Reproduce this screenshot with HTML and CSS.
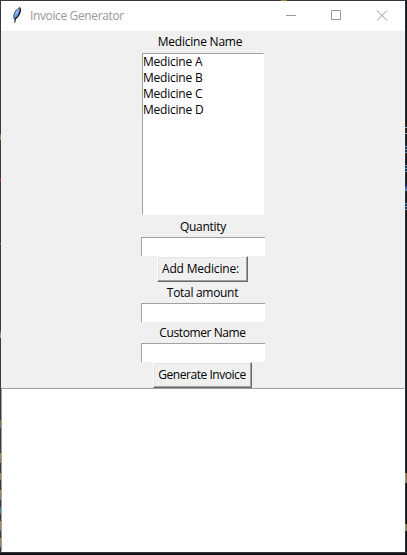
FILE: index.html
```html
<!DOCTYPE html>
<html lang="en">
<head>
<meta charset="utf-8">
<title>Invoice Generator</title>
<link rel="stylesheet" href="styles.css">
</head>
<body>
<div class="window">
  <header class="titlebar">
    <svg class="feather" width="12" height="18" viewBox="0 0 12 18">
      <path d="M9 1.500C6 2.500 3.500 6 2.800 9.500L3 13l1.800-.8C7.500 10 9.800 5.500 9 1.500z" fill="#65a5f2" stroke="#34383f" stroke-width=".9"/>
      <path d="M9.500 2.500C9.500 6 7.500 10.500 4.500 12.800L3.600 16.500" fill="none" stroke="#0c1018" stroke-width="1.100"/>
      <path d="M4.500 8L7.800 2.800" stroke="#c9dcf2" stroke-width=".8"/>
    </svg>
    <span class="title">Invoice Generator</span>
    <svg class="controls" width="138" height="30" viewBox="0 0 138 30" fill="none" stroke="#999">
      <path d="M19 14.500h10M64.500 9.500h9v9h-9zM110 9.500l10 10M120 9.500l-10 10"/>
    </svg>
  </header>
  <main class="form">
    <div class="label name">Medicine Name</div>
    <div class="listbox">
      <div>Medicine A</div><div>Medicine B</div><div>Medicine C</div><div>Medicine D</div>
    </div>
    <div class="label quantity">Quantity</div>
    <input class="entry" aria-label="Quantity">
    <button class="button add">Add Medicine:</button>
    <div class="label total">Total amount</div>
    <input class="entry" aria-label="Total amount">
    <div class="label customer">Customer Name</div>
    <input class="entry" aria-label="Customer Name">
    <button class="button generate">Generate Invoice</button>
    <div class="output"></div>
  </main>
</div>
</body>
</html>
```
FILE: styles.css
```css
* { box-sizing: border-box; }
body {
  margin: 0;
  width: 407px;
  height: 555px;
  padding: 1px 2px 3px 1px;
  overflow: hidden;
  font: 12px/16px "Open Sans", "Noto Sans", sans-serif;
  color: #000;
  background:
    linear-gradient(90deg, #b58a2c, #77673e) 281px 0 / 6px 1px no-repeat,
    linear-gradient(#517579, #c39a4c) 0 134px / 1px 6px no-repeat,
    linear-gradient(#9b3933, #9b3933) 0 179px / 1px 3px no-repeat,
    linear-gradient(#668aa7, #668aa7) 0 243px / 1px 1px no-repeat,
    linear-gradient(#8b6259, #c6aa76) 0 331px / 1px 7px no-repeat,
    linear-gradient(#99602e, #6b7376) 0 420px / 1px 8px no-repeat,
    linear-gradient(#b08a4d, #8d7c6b) 0 453px / 1px 10px no-repeat,
    linear-gradient(#b08a4d, #8d7c6b) 0 473px / 1px 7px no-repeat,
    linear-gradient(#b08a4d, #8d7c6b) 0 490px / 1px 10px no-repeat,
    linear-gradient(#477b9a, #477b9a) 0 507px / 1px 7px no-repeat,
    linear-gradient(#b08a4d, #8d7c6b) 0 521px / 1px 10px no-repeat,
    linear-gradient(#b08a4d, #8d7c6b) 0 538px / 1px 9px no-repeat,
    linear-gradient(#8db1c9, #8db1c9) 405px 127px / 2px 1px no-repeat,
    linear-gradient(#8db1c9, #8db1c9) 405px 133px / 2px 1px no-repeat,
    repeating-linear-gradient(#6298be 0 1px, #17334a 1px 3px) 405px 146px / 2px 7px no-repeat,
    repeating-linear-gradient(#6298be 0 1px, #17334a 1px 3px) 405px 165px / 2px 7px no-repeat,
    linear-gradient(#17145d, #6298be) 405px 184px / 2px 7px no-repeat,
    repeating-linear-gradient(#6298be 0 1px, #17334a 1px 3px) 405px 203px / 2px 7px no-repeat,
    linear-gradient(90deg, #7d98a5 50%, #89713c 50%) 405px 473px / 2px 10px no-repeat,
    linear-gradient(90deg, #7d98a5 50%, #89713c 50%) 405px 524px / 2px 7px no-repeat,
    linear-gradient(90deg, #303134 50%, #101114 50%) 405px 0 / 2px 552px no-repeat,
    linear-gradient(#363538, #363538) 0 552px / 406px 1px no-repeat,
    linear-gradient(#141416, #141416) 0 553px / 407px 2px no-repeat,
    #39383a;
}
.window { display: flex; flex-direction: column; width: 404px; height: 551px; background: #f0f0f0; }
.titlebar { display: flex; flex: none; height: 30px; background: #fff; color: #999; }
.feather { margin: 5px 0 0 10px; }
.title { margin: 7px 0 0 7px; letter-spacing: -.37px; white-space: nowrap; }
.controls { margin-left: auto; }
.form { display: flex; flex: 1; flex-direction: column; align-items: center; }
.label { flex: none; height: 21px; padding-top: 3px; letter-spacing: -.3px; }
.label.name { height: 22px; padding-right: 6px; letter-spacing: -.23px; }
.label.quantity { height: 22px; padding-top: 4px; }
.label.total { padding-right: 1px; }
.label.customer { letter-spacing: -.4px; padding-right: 1px; }
.listbox {
  flex: none;
  width: 122px;
  height: 162px;
  background: #fff;
  border: 1px solid;
  border-color: #a0a0a0 #fff #fff #a0a0a0;
  letter-spacing: -.22px;
}
.entry {
  flex: none;
  width: 124px;
  height: 19px;
  margin-right: 1px;
  padding: 0 2px;
  border: 0 solid #a0a0a0;
  border-width: 1px 0 0 1px;
  border-radius: 0;
  background: #fff;
  font: inherit;
  outline: 0;
}
.button {
  flex: none;
  height: 26px;
  margin-right: 2px;
  padding: 0;
  border: 1px solid;
  border-color: #fff #696969 #696969 #fff;
  border-radius: 0;
  background: #f0f0f0;
  box-shadow: inset -1px -1px #a0a0a0, inset 1px 1px #e3e3e3;
  color: #000;
  font: inherit;
  white-space: nowrap;
}
.add { width: 91px; padding-right: 3px; letter-spacing: -.18px; }
.generate { width: 99px; letter-spacing: -.46px; }
.output { flex: 1; width: 404px; border: 1px solid; border-color: #a0a0a0 #fff #fff #a0a0a0; background: #fff; }
```
